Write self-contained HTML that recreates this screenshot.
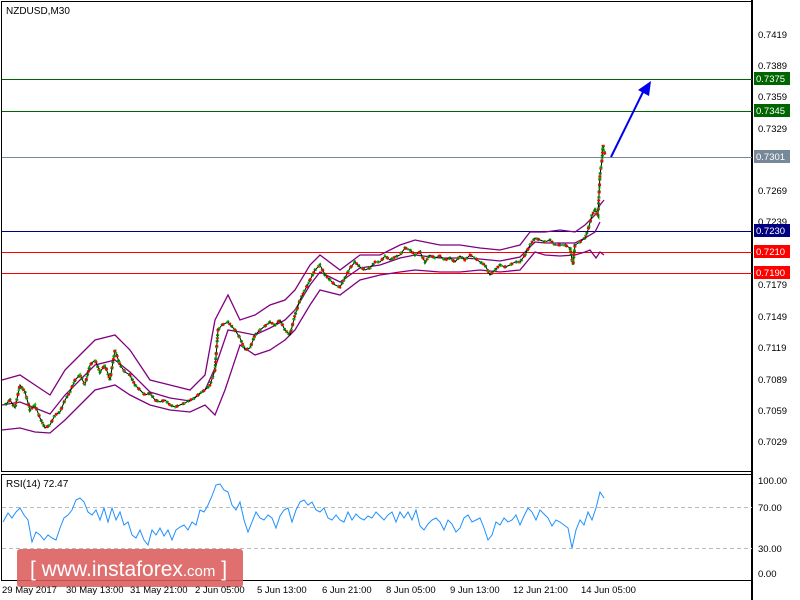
<!DOCTYPE html><html><head><style>body{margin:0;background:#fff}svg{display:block;font-family:"Liberation Sans",Tahoma,sans-serif}</style></head><body>
<svg width="800" height="600" viewBox="0 0 800 600" xmlns="http://www.w3.org/2000/svg">
<defs>
<polyline id="p" fill="none" points="5,405 10,400 15,408 20,385 25,392 30,410 35,405 40,418 45,428 50,425 55,415 60,412 65,400 70,392 75,380 80,375 85,385 90,365 95,360 100,372 105,365 110,380 115,350 120,365 125,372 130,375 135,385 140,390 145,395 150,393 155,400 160,402 165,400 170,405 175,407 180,405 185,403 190,400 195,398 200,393 205,390 210,385 215,370 218,330 222,325 228,322 235,330 240,338 245,350 250,348 255,335 260,330 265,326 270,322 275,325 280,320 285,330 290,335 295,315 300,300 305,290 310,280 315,270 320,265 325,275 330,280 335,285 340,287 345,278 350,268 355,262 360,267 365,270 370,268 375,262 380,262 385,256 390,260 395,257 400,255 405,248 410,250 415,255 420,252 425,262 430,255 435,258 440,256 445,260 450,258 455,262 460,256 465,260 470,255 475,258 480,262 485,265 490,275 495,270 500,265 505,267 510,265 515,262 520,262 525,255 530,245 535,238 540,240 545,242 550,240 555,245 560,245 565,245 570,248 573,265 575,245 580,242 585,238 588,230 592,215 595,210 598,215 600,175 602,160 603,145 605,155"/>
</defs>
<rect width="800" height="600" fill="#fff"/>
<g shape-rendering="crispEdges">
<rect x="1.5" y="1.5" width="751" height="470" fill="none" stroke="#000"/>
<rect x="1.5" y="474.5" width="751" height="106" fill="none" stroke="#000"/>
<line x1="752" y1="0" x2="752" y2="600" stroke="#000" stroke-width="2"/>
<line x1="2" y1="79.5" x2="752" y2="79.5" stroke="#006400"/>
<line x1="2" y1="111.5" x2="752" y2="111.5" stroke="#006400"/>
<line x1="2" y1="157.5" x2="752" y2="157.5" stroke="#778899"/>
<line x1="2" y1="231.5" x2="752" y2="231.5" stroke="#000080"/>
<line x1="2" y1="252.5" x2="752" y2="252.5" stroke="red"/>
<line x1="2" y1="273.5" x2="752" y2="273.5" stroke="red"/>
<line x1="2" y1="507.5" x2="752" y2="507.5" stroke="#bbb" stroke-dasharray="4 3"/>
<line x1="2" y1="548.5" x2="752" y2="548.5" stroke="#bbb" stroke-dasharray="4 3"/>
</g>
<text x="6" y="14" font-size="10">NZDUSD,M30</text>
<polyline fill="none" stroke="#800080" stroke-width="1.3" points="2,380 20,375 35,385 50,395 65,370 80,355 95,340 115,335 130,350 150,380 170,385 190,390 205,375 215,320 228,295 240,320 255,315 270,305 285,300 295,290 310,265 320,255 340,270 360,255 380,255 400,245 415,240 440,245 460,245 480,248 500,250 520,245 530,232 545,232 560,230 575,232 585,225 595,215 600,205 604,200"/>
<polyline fill="none" stroke="#800080" stroke-width="1.3" points="2,405 20,402 35,408 50,414 65,395 80,380 95,365 115,360 130,372 150,392 170,398 190,401 205,390 215,368 228,330 240,332 255,335 270,328 285,320 295,310 310,285 320,272 340,282 360,268 380,265 400,258 415,255 440,258 460,258 480,259 500,261 520,257 535,242 545,243 560,243 575,243 585,238 595,232 600,222"/>
<polyline fill="none" stroke="#800080" stroke-width="1.3" points="2,430 20,428 35,432 50,433 65,420 80,405 95,390 115,385 130,395 150,405 170,410 190,412 205,405 215,415 225,390 240,345 255,355 270,350 285,340 295,330 310,305 320,290 340,295 360,280 380,275 400,272 415,270 440,272 460,272 480,270 500,272 520,270 535,252 545,255 560,256 575,255 585,252 590,250 596,258 600,252 604,255"/>
<use href="#p" stroke="#000" stroke-width="1"/>
<use href="#p" stroke="#008000" stroke-width="3" stroke-dasharray="2 4"/>
<use href="#p" stroke="#f00" stroke-width="3" stroke-dasharray="2 6" stroke-dashoffset="3"/>
<use href="#p" stroke="#0c0" stroke-width="3" stroke-dasharray="1 9" stroke-dashoffset="6"/>
<line x1="611" y1="157" x2="644" y2="90" stroke="#0000ee" stroke-width="2"/>
<polygon points="651,81 649,96 638,90" fill="#0000ee"/>
<g font-size="9.5" fill="#000">
<text x="758" y="38">0.7419</text><text x="758" y="69">0.7389</text><text x="758" y="100">0.7359</text><text x="758" y="132">0.7329</text><text x="758" y="194">0.7269</text><text x="758" y="225">0.7239</text><text x="758" y="288">0.7179</text><text x="758" y="320">0.7149</text><text x="758" y="351">0.7119</text><text x="758" y="383">0.7089</text><text x="758" y="414">0.7059</text><text x="758" y="445">0.7029</text>
<text x="758" y="484">100.00</text><text x="758" y="511">70.00</text><text x="758" y="552">30.00</text><text x="758" y="577">0.00</text>
</g>
<rect x="754" y="72" width="36" height="13" fill="#006400"/><text x="756" y="82" font-size="9.5" fill="#fff">0.7375</text>
<rect x="754" y="104" width="36" height="13" fill="#006400"/><text x="756" y="114" font-size="9.5" fill="#fff">0.7345</text>
<rect x="754" y="150" width="36" height="13" fill="#778899"/><text x="756" y="160" font-size="9.5" fill="#fff">0.7301</text>
<rect x="754" y="224" width="36" height="13" fill="#000080"/><text x="756" y="234" font-size="9.5" fill="#fff">0.7230</text>
<rect x="754" y="245" width="36" height="13" fill="red"/><text x="756" y="255" font-size="9.5" fill="#fff">0.7210</text>
<rect x="754" y="266" width="36" height="13" fill="red"/><text x="756" y="276" font-size="9.5" fill="#fff">0.7190</text>
<text x="6" y="487" font-size="10">RSI(14) 72.47</text>
<polyline fill="none" stroke="#1e90ff" points="3,522 8,513 12,518 16,512 20,508 24,515 28,520 32,542 36,532 40,535 44,540 48,535 52,538 56,540 60,528 64,518 68,515 72,510 76,500 80,498 84,502 88,512 92,515 96,510 100,520 104,508 108,522 112,508 116,520 120,512 124,525 128,522 132,535 136,538 140,530 144,540 148,545 152,530 156,535 160,528 164,536 168,530 172,540 176,530 180,527 184,525 188,530 192,522 196,525 200,510 204,512 208,505 212,496 216,485 220,484 224,490 228,492 232,505 236,510 240,502 244,520 248,532 252,522 256,512 260,518 264,520 268,515 272,518 276,528 280,516 284,510 288,508 292,522 296,510 300,502 304,500 308,505 312,502 316,510 320,512 324,508 328,518 332,520 336,515 340,520 344,522 348,512 352,520 356,514 360,518 364,520 368,516 372,518 376,512 380,516 384,520 388,515 392,512 396,522 400,512 404,518 408,512 412,520 416,510 420,526 424,530 428,524 432,520 436,518 440,522 444,530 448,520 452,524 456,532 460,528 464,518 468,515 472,522 476,520 480,518 484,528 488,540 492,535 496,522 500,525 504,518 508,522 512,520 516,515 520,525 524,516 528,508 532,512 536,520 540,510 544,514 548,518 552,526 556,520 560,522 564,525 568,528 572,548 576,530 580,520 584,525 588,512 592,520 596,508 600,492 604,498"/>
<rect x="17" y="549" width="226" height="38" rx="3" fill="#dc5c5c" opacity="0.88"/>
<text x="30" y="576" font-size="21" fill="#fff">[ www.instaforex<tspan font-size="15">.com</tspan> ]</text>
<g font-size="9.5" fill="#000">
<text x="2" y="593">29 May 2017</text><text x="66" y="593">30 May 13:00</text><text x="130" y="593">31 May 21:00</text><text x="195" y="593">2 Jun 05:00</text><text x="257" y="593">5 Jun 13:00</text><text x="322" y="593">6 Jun 21:00</text><text x="386" y="593">8 Jun 05:00</text><text x="450" y="593">9 Jun 13:00</text><text x="513" y="593">12 Jun 21:00</text><text x="581" y="593">14 Jun 05:00</text>
</g>
</svg></body></html>
